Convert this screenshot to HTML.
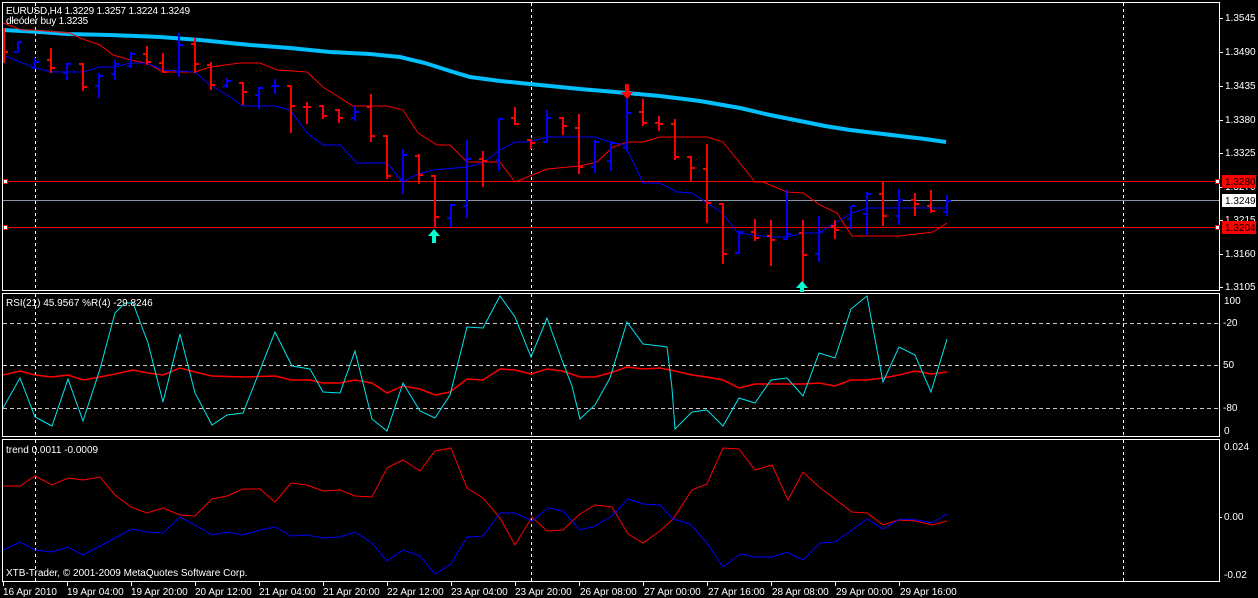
<!DOCTYPE html>
<html><head><meta charset="utf-8"><style>
html,body{margin:0;padding:0;background:#000;width:1258px;height:598px;overflow:hidden}
svg{display:block}
text{font-family:"Liberation Sans","DejaVu Sans",sans-serif;font-size:10px;fill:#fff}
</style></head><body>
<svg width="1258" height="598" viewBox="0 0 1258 598" xmlns="http://www.w3.org/2000/svg">
<rect width="1258" height="598" fill="#000"/>
<g fill="none" stroke="#fff" stroke-width="1">
<rect x="2.5" y="2.5" width="1217" height="288"/>
<rect x="2.5" y="293.5" width="1217" height="143"/>
<rect x="2.5" y="439.5" width="1217" height="142"/>
</g>
<g stroke="#fff" stroke-width="1" stroke-dasharray="3,3">
<path d="M35.5 3V290M35.5 294V436M35.5 440V581"/>
<path d="M531.5 3V290M531.5 294V436M531.5 440V581"/>
<path d="M1123.5 3V290M1123.5 294V436M1123.5 440V581"/>
</g>
<path d="M3 181.5H1219M3 227.5H1219" stroke="#f00" stroke-width="1"/>
<path d="M3 200.5H1219" stroke="#8a96a8" stroke-width="1"/>
<rect x="3.5" y="179.5" width="4" height="4" fill="#fff" stroke="#f00"/>
<rect x="3.5" y="225.5" width="4" height="4" fill="#fff" stroke="#f00"/>
<rect x="1215.5" y="179.5" width="4" height="4" fill="#fff" stroke="#f00"/>
<rect x="1215.5" y="225.5" width="4" height="4" fill="#fff" stroke="#f00"/>
<polyline fill="none" stroke="#00bfff" stroke-width="4" points="3,30 40,32 67,34 110,35 160,37 200,40 250,45 290,48 330,52 370,54 400,57 425,63 450,71 470,77 500,81 530,84 580,89 627,93 660,96 700,101 740,108 770,115 800,121 825,126 850,130 875,133 900,136 925,139 946,142"/>
<polyline fill="none" stroke="#f00" stroke-width="1" points="3,23 22,30 33,30 70,33 80,38 100,45 113,55 130,60 147,63 163,72 195,72 210,67 240,63 260,63 277,70 307,72 323,87 353,106 387,106 403,110 418,133 437,145 450,145 467,162 500,162 515,182 547,169 580,166 597,162 613,147 628,142 643,142 660,137 707,137 723,142 755,182 763,182 787,192 803,193 820,205 837,213 852,236 900,236 933,232 947,223"/>
<polyline fill="none" stroke="#00f" stroke-width="1" points="3,55 20,62 33,67 50,72 83,72 100,67 115,67 130,63 147,63 163,70 195,72 210,85 227,95 243,106 275,106 290,110 307,133 323,145 340,145 357,163 387,163 403,182 418,174 433,170 467,167 483,163 500,150 515,142 528,142 548,137 595,137 610,142 625,145 643,183 660,183 677,192 692,193 707,203 722,213 738,233 770,237 787,237 803,233 818,233 835,223 852,213 867,208 947,208"/>
<path fill="none" stroke="#00f" stroke-width="2" d="M18 42V52M14 52H18M18 42H22M35 58V68M31 68H35M35 62H39M67 63V80M63 73H67M67 64H71M99 73V98M95 86H99M99 76H103M115 60V80M111 74H115M115 64H119M131 52V68M127 66H131M131 54H135M179 33V77M175 72H179M179 45H183M227 78V88M223 86H227M227 81H231M259 87V109M255 95H259M259 88H263M275 79V94M271 86H275M275 86H279M355 106V121M351 118H355M355 112H359M403 149V194M399 180H403M403 155H407M451 204V227M447 218H451M451 205H455M467 140V218M463 206H467M467 159H471M499 118V171M495 160H499M499 119H503M547 110V142M543 142H547M547 118H551M595 140V173M591 167H595M595 142H599M611 141V171M607 161H611M611 143H615M627 97V151M623 148H627M627 113H631M739 231V253M735 253H739M739 232H743M787 190V240M783 239H787M787 234H791M819 216V262M815 254H819M819 232H823M851 206V229M847 219H851M851 206H855M867 192V235M863 214H867M867 194H871M899 189V225M895 216H899M899 200H903M947 195V216M943 212H947M947 201H951"/>
<path fill="none" stroke="#f00" stroke-width="2" d="M4 28V63M4 52H8M51 48V73M47 60H51M51 68H55M83 63V91M79 64H83M83 87H87M147 46V65M143 54H147M147 62H151M163 53V73M159 63H163M163 72H167M195 38V73M191 44H195M195 64H199M211 62V90M207 65H211M211 85H215M243 82V105M239 83H243M243 92H247M291 86V133M287 86H291M291 106H295M307 102V124M303 107H307M307 107H311M323 105V119M319 106H323M323 116H327M339 109V123M335 110H339M339 118H343M371 94V142M367 107H371M371 136H375M387 135V179M383 136H387M387 176H391M419 154V184M415 156H419M419 175H423M435 175V228M431 176H435M435 217H439M483 151V187M479 159H483M483 161H487M515 107V125M511 118H515M515 124H519M531 139V149M527 140H531M531 143H535M563 117V135M559 118H563M563 126H567M579 114V174M575 128H579M579 167H583M643 99V126M639 112H643M643 123H647M659 116V131M655 123H659M659 124H663M675 119V160M671 124H675M675 157H679M691 156V182M687 157H691M691 168H695M707 144V223M703 169H707M707 203H711M723 203V264M719 204H723M723 254H727M755 219V241M751 232H755M755 238H759M771 220V266M767 236H771M771 240H775M803 220V289M799 233H803M803 255H807M835 220V239M831 226H835M835 230H839M883 182V226M879 194H883M883 216H887M915 193V216M911 200H915M915 204H919M931 190V213M927 206H931M931 211H935"/>
<path d="M434 229L428 236H432V243H436V236H440Z" fill="#00ffd0"/>
<path d="M802 281L796 288H800V292H804V288H808Z" fill="#00ffd0"/>
<path d="M627 99L621 92H625V84H629V92H633Z" fill="#f00"/>
<text x="6" y="14" letter-spacing="-0.2">EURUSD,H4  1.3229 1.3257 1.3224 1.3249</text>
<text x="6" y="24" letter-spacing="-0.2">dłeóder buy 1.3235</text>
<g stroke="#fff"><path d="M1220 18.5h3M1220 52.5h3M1220 86.5h3M1220 120.5h3M1220 153.5h3M1220 187.5h3M1220 220.5h3M1220 254.5h3M1220 287.5h3"/></g>
<g>
<text x="1225" y="21">1.3545</text>
<text x="1225" y="55">1.3490</text>
<text x="1225" y="89">1.3435</text>
<text x="1225" y="123">1.3380</text>
<text x="1225" y="156">1.3325</text>
<text x="1225" y="190">1.3270</text>
<text x="1225" y="223">1.3215</text>
<text x="1225" y="257">1.3160</text>
<text x="1225" y="290">1.3105</text>
</g>
<rect x="1222" y="175" width="34" height="13" fill="#f00"/>
<text x="1225" y="185" style="fill:#000">1.3280</text>
<rect x="1222" y="194" width="34" height="13" fill="#fff"/>
<text x="1225" y="204" style="fill:#000">1.3249</text>
<rect x="1222" y="221" width="34" height="13" fill="#f00"/>
<text x="1225" y="231" style="fill:#000">1.3204</text>
<g stroke="#c8c8c8" stroke-dasharray="4,3"><path d="M3 323.5H1219M3 365.5H1219M3 408.5H1219"/></g>
<polyline fill="none" stroke="#f00" stroke-width="1.5" points="3,375 20,371 35,375 52,377 68,375 83,380 100,377 115,374 133,370 148,373 163,375 180,368 195,372 212,376 243,377 275,376 292,380 310,380 323,383 340,383 355,380 372,383 387,393 403,386 420,389 435,395 450,392 467,379 483,380 500,369 515,370 531,374 547,369 562,371 580,377 595,377 610,373 627,367 643,369 660,368 675,371 692,375 707,377 723,380 739,388 755,384 771,384 787,384 803,384 819,383 835,386 851,380 867,380 883,378 899,375 915,371 931,374 947,372"/>
<polyline fill="none" stroke="#00e5ee" stroke-width="1" points="3,408 20,378 35,417 52,426 68,379 83,421 100,369 115,313 125,303 133,303 148,343 163,402 180,334 195,393 212,425 227,415 243,413 275,332 292,366 310,369 323,392 340,393 355,351 372,419 387,431 403,383 420,411 435,418 450,395 467,327 483,328 500,296 515,317 531,357 547,318 562,360 572,386 580,419 595,405 610,378 627,322 643,344 660,346 667,347 672,388 675,429 692,412 707,410 723,426 739,398 755,403 771,380 787,378 803,396 819,353 835,358 851,309 867,296 883,382 899,347 915,355 931,392 947,339"/>
<text x="6" y="306">RSI(21) 45.9567  %R(4) -29.8246</text>
<text x="1224" y="304">100</text>
<text x="1223" y="326">-20</text>
<text x="1223" y="368">50</text>
<text x="1223" y="411">-80</text>
<text x="1224" y="434">0</text>
<polyline fill="none" stroke="#f00" stroke-width="1" points="3,486 20,486 35,476 52,485 68,478 83,480 100,477 115,495 131,507 147,513 163,508 180,515 195,516 212,499 227,496 243,489 260,489 275,502 291,483 307,485 323,491 340,490 355,496 372,497 387,468 403,460 420,471 435,451 451,448 467,488 483,498 500,518 515,545 532,517 547,531 563,530 580,514 595,505 612,507 628,534 643,543 660,531 673,519 692,490 707,484 723,448 739,449 755,470 772,465 788,500 803,472 818,486 835,499 852,512 867,513 883,525 898,520 915,521 932,525 947,521"/>
<polyline fill="none" stroke="#00f" stroke-width="1" points="3,550 20,542 35,550 52,552 68,547 83,555 100,546 115,538 132,529 147,532 163,533 180,517 195,525 212,535 227,532 243,535 260,530 275,527 291,536 307,535 323,538 340,537 355,532 372,543 387,561 403,550 420,556 435,574 451,564 467,537 483,536 500,513 515,513 532,521 548,508 563,511 580,530 595,526 612,516 628,499 643,504 660,505 673,519 690,524 707,543 723,567 740,554 755,557 772,557 787,552 803,560 820,543 835,542 852,530 867,519 883,529 900,519 917,520 932,523 947,514"/>
<text x="6" y="453">trend 0.0011 -0.0009</text>
<text x="6" y="576">XTB-Trader, © 2001-2009 MetaQuotes Software Corp.</text>
<text x="1224" y="450">0.024</text>
<path d="M1220 517.5h2" stroke="#fff"/>
<text x="1224" y="520">0.00</text>
<text x="1224" y="578">-0.02</text>
<g stroke="#fff"><path d="M3.5 582v4M67.5 582v4M131.5 582v4M195.5 582v4M259.5 582v4M323.5 582v4M387.5 582v4M451.5 582v4M515.5 582v4M579.5 582v4M643.5 582v4M707.5 582v4M771.5 582v4M835.5 582v4M899.5 582v4"/></g>
<g>
<text x="3" y="595">16 Apr 2010</text>
<text x="67" y="595">19 Apr 04:00</text>
<text x="131" y="595">19 Apr 20:00</text>
<text x="195" y="595">20 Apr 12:00</text>
<text x="259" y="595">21 Apr 04:00</text>
<text x="323" y="595">21 Apr 20:00</text>
<text x="387" y="595">22 Apr 12:00</text>
<text x="451" y="595">23 Apr 04:00</text>
<text x="515" y="595">23 Apr 20:00</text>
<text x="580" y="595">26 Apr 08:00</text>
<text x="644" y="595">27 Apr 00:00</text>
<text x="708" y="595">27 Apr 16:00</text>
<text x="772" y="595">28 Apr 08:00</text>
<text x="836" y="595">29 Apr 00:00</text>
<text x="900" y="595">29 Apr 16:00</text>
</g>
</svg>
</body></html>
